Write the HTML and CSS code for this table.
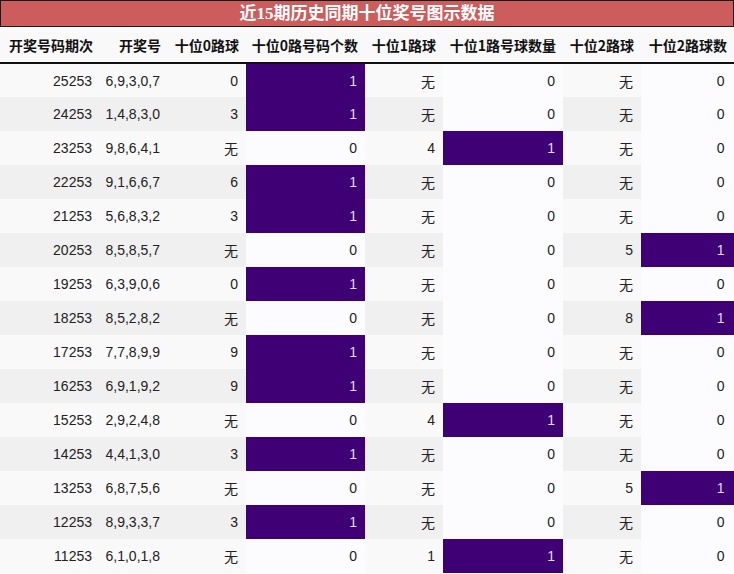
FILE: index.html
```html
<!DOCTYPE html>
<html lang="zh">
<head>
<meta charset="utf-8">
<link rel="stylesheet" href="styles.css">
</head>
<body>
<div class="title">近15期历史同期十位奖号图示数据</div>
<table class="data">
  <colgroup>
    <col class="c1"><col class="c2"><col class="c3"><col class="c4"><col class="c5"><col class="c6"><col class="c7"><col class="c8">
  </colgroup>
  <thead>
    <tr><th>开奖号码期次</th><th>开奖号</th><th>十位0路球</th><th>十位0路号码个数</th><th>十位1路球</th><th>十位1路号球数量</th><th>十位2路球</th><th>十位2路球数</th></tr>
  </thead>
  <tbody>
    <tr><td>25253</td><td>6,9,3,0,7</td><td>0</td><td class="cnt hit">1</td><td class="cj">无</td><td class="cnt">0</td><td class="cj">无</td><td class="cnt">0</td></tr>
    <tr><td>24253</td><td>1,4,8,3,0</td><td>3</td><td class="cnt hit">1</td><td class="cj">无</td><td class="cnt">0</td><td class="cj">无</td><td class="cnt">0</td></tr>
    <tr><td>23253</td><td>9,8,6,4,1</td><td class="cj">无</td><td class="cnt">0</td><td>4</td><td class="cnt hit">1</td><td class="cj">无</td><td class="cnt">0</td></tr>
    <tr><td>22253</td><td>9,1,6,6,7</td><td>6</td><td class="cnt hit">1</td><td class="cj">无</td><td class="cnt">0</td><td class="cj">无</td><td class="cnt">0</td></tr>
    <tr><td>21253</td><td>5,6,8,3,2</td><td>3</td><td class="cnt hit">1</td><td class="cj">无</td><td class="cnt">0</td><td class="cj">无</td><td class="cnt">0</td></tr>
    <tr><td>20253</td><td>8,5,8,5,7</td><td class="cj">无</td><td class="cnt">0</td><td class="cj">无</td><td class="cnt">0</td><td>5</td><td class="cnt hit">1</td></tr>
    <tr><td>19253</td><td>6,3,9,0,6</td><td>0</td><td class="cnt hit">1</td><td class="cj">无</td><td class="cnt">0</td><td class="cj">无</td><td class="cnt">0</td></tr>
    <tr><td>18253</td><td>8,5,2,8,2</td><td class="cj">无</td><td class="cnt">0</td><td class="cj">无</td><td class="cnt">0</td><td>8</td><td class="cnt hit">1</td></tr>
    <tr><td>17253</td><td>7,7,8,9,9</td><td>9</td><td class="cnt hit">1</td><td class="cj">无</td><td class="cnt">0</td><td class="cj">无</td><td class="cnt">0</td></tr>
    <tr><td>16253</td><td>6,9,1,9,2</td><td>9</td><td class="cnt hit">1</td><td class="cj">无</td><td class="cnt">0</td><td class="cj">无</td><td class="cnt">0</td></tr>
    <tr><td>15253</td><td>2,9,2,4,8</td><td class="cj">无</td><td class="cnt">0</td><td>4</td><td class="cnt hit">1</td><td class="cj">无</td><td class="cnt">0</td></tr>
    <tr><td>14253</td><td>4,4,1,3,0</td><td>3</td><td class="cnt hit">1</td><td class="cj">无</td><td class="cnt">0</td><td class="cj">无</td><td class="cnt">0</td></tr>
    <tr><td>13253</td><td>6,8,7,5,6</td><td class="cj">无</td><td class="cnt">0</td><td class="cj">无</td><td class="cnt">0</td><td>5</td><td class="cnt hit">1</td></tr>
    <tr><td>12253</td><td>8,9,3,3,7</td><td>3</td><td class="cnt hit">1</td><td class="cj">无</td><td class="cnt">0</td><td class="cj">无</td><td class="cnt">0</td></tr>
    <tr><td>11253</td><td>6,1,0,1,8</td><td class="cj">无</td><td class="cnt">0</td><td>1</td><td class="cnt hit">1</td><td class="cj">无</td><td class="cnt">0</td></tr>
  </tbody>
</table>
</body>
</html>
```
FILE: styles.css
```css
html, body {
  margin: 0;
  padding: 0;
  background: #ffffff;
}
body {
  width: 734px;
  font-family: "Liberation Sans", "Noto Sans CJK SC", sans-serif;
  color: #222222;
}
.title {
  height: 25px;
  line-height: 25px;
  background: #cd5c5c;
  border: 1px solid #1a1a1a;
  color: #ffffff;
  text-align: center;
  font-family: "Liberation Serif", "Noto Sans CJK SC", serif;
  font-weight: bold;
  font-size: 17px;
}
.data {
  width: 734px;
  border-collapse: collapse;
  table-layout: fixed;
  font-size: 14px;
}
.c1 { width: 100px; }
.c2 { width: 68px; }
.c3 { width: 78px; }
.c4 { width: 119px; }
.c5 { width: 78px; }
.c6 { width: 120px; }
.c7 { width: 78px; }
.c8 { width: 93px; }
.data thead tr { height: 36px; }
.data tbody tr { height: 34px; }
.data th {
  padding: 0 7px 0 0;
  text-align: right;
  font-weight: bold;
  font-size: 14px;
  color: #111111;
  background: #f9f9f9;
  border-bottom: 2px solid #111111;
  font-family: "Noto Sans CJK SC", sans-serif;
  white-space: nowrap;
  line-height: 18px;
}
.data th:first-child { text-align: left; padding-left: 9px; }
.data td {
  padding: 0 8px 0 0;
  text-align: right;
  white-space: nowrap;
  background: #f9f9f9;
  line-height: 16px;
}
.data tbody tr:nth-child(even) td { background: #f0f0f0; }
.data tbody tr td.cnt { background: #fcfcfe; }
.data tbody tr td.hit { background: #3f0075; color: #e2dcea; }
.data td.cj { font-family: "Noto Sans CJK SC", sans-serif; }
.data td:last-child { padding-right: 9px; border-right: 1px solid #e6e6e6; }
```
